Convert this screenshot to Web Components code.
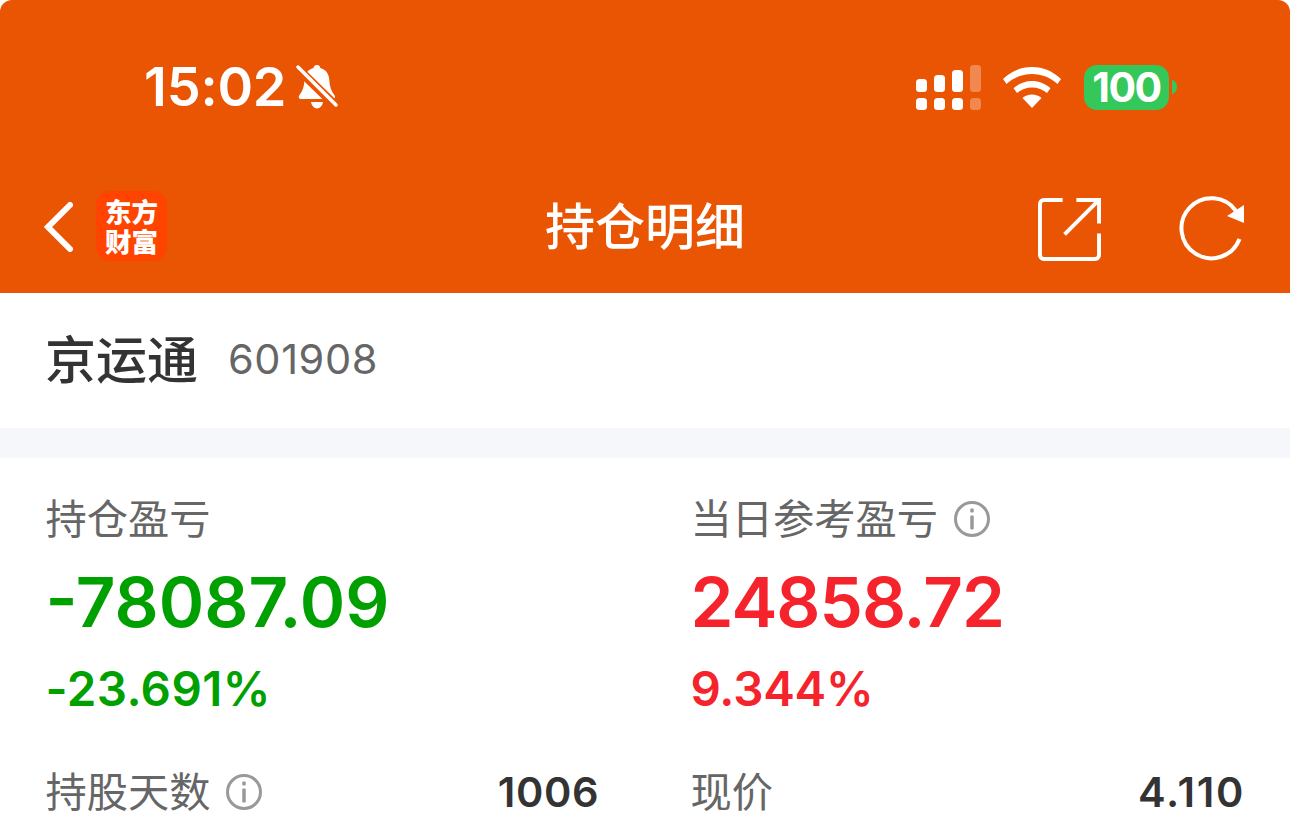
<!DOCTYPE html>
<html>
<head>
<meta charset="utf-8">
<style>
  html, body { margin: 0; padding: 0; background: #fff; }
  body { width: 1290px; height: 837px; overflow: hidden; font-family: Inter, "Noto Sans CJK SC", sans-serif; }
</style>
</head>
<body>
<app-header title="持仓明细"></app-header>
<stock-title name="京运通" code="601908"></stock-title>
<position-panel></position-panel>

<script>
const CJK = 'Inter, "Noto Sans CJK SC", sans-serif';
const ORANGE = '#ea5504';

class StatusBar extends HTMLElement {
  constructor() {
    super();
    this.attachShadow({ mode: 'open' });
  }
  connectedCallback() {
    this.shadowRoot.innerHTML = `
    <style>
      :host { display: flex; align-items: center; height: 168px; padding: 6px 113px 0 144px; color: #fff; box-sizing: border-box; }
      .time { font: 600 54px/1 Inter, sans-serif; letter-spacing: -.2px; }
      .left { display: flex; align-items: center; gap: 10px; }
      .right { margin-left: auto; display: flex; align-items: center; gap: 22px; }
      .batt { display: flex; align-items: center; gap: 3px; margin-left: 1px; }
      .batt b { display: block; width: 85px; height: 45px; border-radius: 13px; background: #34c759; font: 700 41px/45px Inter, sans-serif; text-align: center; letter-spacing: -1.500px; }
      svg { display: block; }
    </style>
    <div class="left">
      <span class="time">15:02</span>
      <svg width="42" height="46" viewBox="0 0 42 46">
        <path fill="#fff" d="M21 1c2 0 3 1 3.300 3 5.700 1.500 8.700 6 9 12 .3 6 1.700 11 5 15 1.500 2 .5 4-1.500 4H5c-2 0-3-2-1.500-4 3.300-4 4.700-9 5-15 .3-6 3.300-10.500 9-12C17.800 2 19 1 21 1z"/>
        <path fill="#fff" d="M15 38h12c-.5 3.500-3 6.500-6 6.500s-5.500-3-6-6.500z"/>
        <path stroke="${ORANGE}" stroke-width="9" d="M-2 1L42 44"/>
        <path stroke="#fff" stroke-width="3.500" stroke-linecap="round" d="M2 3L40 41"/>
      </svg>
    </div>
    <div class="right">
      <svg width="65" height="45" viewBox="0 0 65 45" fill="#fff">
        <rect x="0" y="14" width="11" height="13" rx="3.500"/>
        <rect x="18" y="10" width="11" height="17" rx="3.500"/>
        <rect x="36" y="5" width="11" height="22" rx="3.500"/>
        <rect x="54" y="0" width="11" height="27" rx="3.500" opacity=".3"/>
        <rect x="0" y="33" width="11" height="12" rx="3.500"/>
        <rect x="18" y="33" width="11" height="12" rx="3.500"/>
        <rect x="36" y="33" width="11" height="12" rx="3.500"/>
        <rect x="54" y="33" width="11" height="12" rx="3.500" opacity=".3"/>
      </svg>
      <svg width="58" height="41" viewBox="0 0 58 41" fill="#fff">
        <path d="M29 0c11 0 21 4.300 29 12l-3.500 5C47.500 10.500 38.500 7 29 7S10.500 10.500 3.500 17L0 12C8 4.300 18 0 29 0z"/>
        <path d="M29 14c7 0 13.300 2.700 18.500 7.200L44 26c-4-3.500-9.500-5.500-15-5.500S18 22.500 14 26l-3.500-4.800C15.700 16.700 22 14 29 14z"/>
        <path d="M29 27.500c3.700 0 7 1.400 9.500 3.500L29 41 19.500 31c2.500-2.100 5.800-3.500 9.500-3.500z"/>
      </svg>
      <div class="batt">
        <b>100</b>
        <svg width="5" height="14" viewBox="0 0 5 14"><path fill="#34c759" d="M0 0c3 .5 5 3.300 5 7s-2 6.500-5 7z"/></svg>
      </div>
    </div>`;
  }
}
customElements.define('status-bar', StatusBar);

class AppHeader extends HTMLElement {
  constructor() {
    super();
    this.attachShadow({ mode: 'open' });
  }
  connectedCallback() {
    this.shadowRoot.innerHTML = `
    <style>
      :host { display: block; background: ${ORANGE}; height: 293px; border-radius: 12px 12px 0 0; }
      .nav { display: flex; align-items: center; height: 118px; padding: 0 45px 0 44px; box-sizing: border-box; position: relative; }
      .logo { margin-left: 23px; width: 71px; height: 70px; border-radius: 14px; background: #ff4400; color: #fff; display: flex; align-items: center; justify-content: center; position: relative; top: -1px; }
      .logo span { display: block; width: 54px; text-align: center; font: 900 26.500px/30px "Noto Sans CJK SC", sans-serif; word-break: break-all; }
      .title { position: absolute; left: 0; right: 0; top: 0; bottom: 0; display: flex; align-items: center; justify-content: center; color: #fff; font: 500 50px/1 ${CJK}; }
      .actions { margin-left: auto; display: flex; align-items: center; gap: 78px; position: relative; top: 2px; }
      svg { display: block; position: relative; }
    </style>
    <status-bar></status-bar>
    <div class="nav">
      <div class="title">${this.getAttribute('title')}</div>
      <svg width="29" height="50" viewBox="0 0 29 50"><path d="M26 3L4 25L26 47" fill="none" stroke="#fff" stroke-width="6" stroke-linecap="round" stroke-linejoin="miter"/></svg>
      <div class="logo"><span>东方财富</span></div>
      <div class="actions">
        <svg width="63" height="63" viewBox="0 0 64 64" fill="none" stroke="#fff" stroke-width="4">
          <path d="M25 2H6a4 4 0 0 0-4 4v52a4 4 0 0 0 4 4h52a4 4 0 0 0 4-4V36"/>
          <path d="M39 2h23v24"/>
          <path d="M61 3L27 37"/>
        </svg>
        <svg width="66" height="66" viewBox="0 0 66 66" fill="none" stroke="#fff" stroke-width="4">
          <path d="M60.500 43A30 30 0 1 1 57 15"/>
          <path d="M65 9V27L48 20z" fill="#fff" stroke="none"/>
        </svg>
      </div>
    </div>`;
  }
}
customElements.define('app-header', AppHeader);

class StockTitle extends HTMLElement {
  constructor() {
    super();
    this.attachShadow({ mode: 'open' });
  }
  connectedCallback() {
    this.shadowRoot.innerHTML = `
    <style>
      :host { display: flex; align-items: center; gap: 30px; padding: 0 45px; box-sizing: border-box; border-bottom: 30px solid #f5f7fa; height: 165px; }
      .name { font: 500 51px/1 ${CJK}; color: #333; }
      .code { font: 400 41.500px/1 Inter, sans-serif; letter-spacing: .6px; color: #666; margin-top: -1px; }
    </style>
    <span class="name">${this.getAttribute('name')}</span>
    <span class="code">${this.getAttribute('code')}</span>`;
  }
}
customElements.define('stock-title', StockTitle);

class InfoIcon extends HTMLElement {
  constructor() {
    super();
    this.attachShadow({ mode: 'open' });
    this.shadowRoot.innerHTML = `
    <style>:host { display: inline-block; width: 36px; height: 36px; } svg { display: block; }</style>
    <svg width="36" height="36" viewBox="0 0 36 36">
      <circle cx="18" cy="18" r="16.500" fill="none" stroke="#999" stroke-width="3"/>
      <rect x="16.250" y="14.500" width="3.500" height="14" rx="1" fill="#999"/>
      <rect x="16.250" y="7.500" width="3.500" height="4" rx="1" fill="#999"/>
    </svg>`;
  }
}
customElements.define('info-icon', InfoIcon);

class ProfitCell extends HTMLElement {
  constructor() {
    super();
    this.attachShadow({ mode: 'open' });
  }
  connectedCallback() {
    const c = this.getAttribute('color');
    this.shadowRoot.innerHTML = `
    <style>
      :host { display: block; }
      .label { display: flex; align-items: center; gap: 15.500px; height: 50px; font: 400 41.250px/50px ${CJK}; color: #666; }
      .value { font: 600 69px/1 Inter, sans-serif; letter-spacing: ${this.getAttribute('track') || 0}px; color: ${c}; margin-top: 24px; }
      .pct { font: 600 47.500px/1 Inter, sans-serif; letter-spacing: ${this.getAttribute('pct-track') || 0}px; color: ${c}; margin-top: 28px; }
    </style>
    <div class="label"><slot></slot></div>
    <div class="value">${this.getAttribute('value')}</div>
    <div class="pct">${this.getAttribute('pct')}</div>`;
  }
}
customElements.define('profit-cell', ProfitCell);

class StatCell extends HTMLElement {
  constructor() {
    super();
    this.attachShadow({ mode: 'open' });
  }
  connectedCallback() {
    const track = this.getAttribute('track') || 0;
    this.shadowRoot.innerHTML = `
    <style>
      :host { display: flex; align-items: center; justify-content: space-between; height: 50px; }
      .label { display: flex; align-items: center; gap: 15.500px; font: 400 41.250px/50px ${CJK}; color: #666; }
      .val { font: 600 41.500px/50px Inter, sans-serif; letter-spacing: ${track}px; margin-right: -${track}px; color: #333; }
    </style>
    <div class="label"><slot></slot></div>
    <div class="val">${this.getAttribute('value')}</div>`;
  }
}
customElements.define('stat-cell', StatCell);

class PositionPanel extends HTMLElement {
  constructor() {
    super();
    this.attachShadow({ mode: 'open' });
  }
  connectedCallback() {
    this.shadowRoot.innerHTML = `
    <style>
      :host { display: grid; grid-template-columns: 553px 553px; column-gap: 92px; row-gap: 54px; padding: 36px 46.500px 0 45.500px; }
    </style>
    <profit-cell color="#00a000" value="-78087.09" pct="-23.691%" pct-track="0.4">持仓盈亏</profit-cell>
    <profit-cell color="#f5232b" value="24858.72" track="-1" pct="9.344%" pct-track="-0.2">当日参考盈亏<info-icon></info-icon></profit-cell>
    <stat-cell value="1006" track="0.6">持股天数<info-icon></info-icon></stat-cell>
    <stat-cell value="4.110" track="1.800">现价</stat-cell>`;
  }
}
customElements.define('position-panel', PositionPanel);
</script>
</body>
</html>
